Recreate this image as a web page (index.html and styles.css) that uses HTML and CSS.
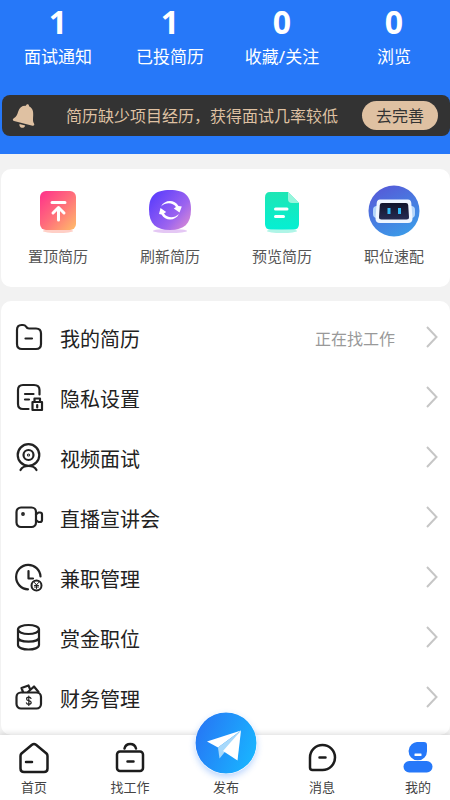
FILE: index.html
```html
<!DOCTYPE html>
<html lang="zh-CN">
<head>
<meta charset="utf-8">
<meta name="viewport" content="width=device-width, initial-scale=1">
<title>我的</title>
<link rel="stylesheet" href="styles.css">
</head>
<body>
<div class="app">
  <header class="header">
    <div class="stats">
      <a class="stat" href="#"><strong class="stat-value">1</strong><span class="stat-label">面试通知</span></a>
      <a class="stat" href="#"><strong class="stat-value">1</strong><span class="stat-label">已投简历</span></a>
      <a class="stat" href="#"><strong class="stat-value">0</strong><span class="stat-label">收藏/关注</span></a>
      <a class="stat" href="#"><strong class="stat-value">0</strong><span class="stat-label">浏览</span></a>
    </div>
    <div class="notice">
      <svg class="notice-icon" width="24" height="28" viewBox="0 0 24 28" fill="#dfc1a2">
        <path d="M14 3.800C14.200 1.600 17.200 1.800 17 4.200C20.800 6 21.400 9.600 21.200 13C21 17 20.600 19.500 22 21.500C22.800 23 22 24 20.500 23.700L2 19C.5 18.500.4 17 1.800 16.300C4.500 15 5.200 12.500 6.200 9.500C7.500 5.500 10 3.500 14 3.800Z"/>
        <path d="M7.500 22L13.200 23.400C12.800 25.500 11 26.200 9.500 25.700C8 25.200 7 23.800 7.500 22Z"/>
      </svg>
      <p class="notice-text">简历缺少项目经历，获得面试几率较低</p>
      <button class="notice-button" type="button">去完善</button>
    </div>
  </header>

  <main class="main">
    <nav class="card shortcuts" aria-label="简历工具">
      <a class="shortcut" href="#">
        <svg width="52" height="52" viewBox="0 0 52 52">
          <defs>
            <linearGradient id="pin" x1="0" y1="0" x2="1" y2="1"><stop offset="0" stop-color="#ff2f8b"/><stop offset=".5" stop-color="#ff6e7b"/><stop offset="1" stop-color="#ffbe69"/></linearGradient>
          </defs>
          <ellipse cx="26" cy="46" rx="15" ry="2" fill="#ffcfc6"/>
          <rect x="8" y="6" width="36" height="39" rx="6" fill="url(#pin)"/>
          <path d="M20 17.500H33M26.500 35V24M21 28L26.500 22.500L32 28" fill="none" stroke="#fff" stroke-width="3" stroke-linecap="round" stroke-linejoin="round"/>
        </svg>
        <span>置顶简历</span>
      </a>
      <a class="shortcut" href="#">
        <svg width="52" height="52" viewBox="0 0 52 52">
          <defs>
            <linearGradient id="refresh" x1="0" y1=".2" x2="1" y2="1"><stop offset="0" stop-color="#5c3dfc"/><stop offset=".6" stop-color="#9c64ef"/><stop offset="1" stop-color="#e391cf"/></linearGradient>
          </defs>
          <ellipse cx="26" cy="46" rx="17" ry="2" fill="#e4c7f4"/>
          <path d="M26 5C41 5 47 11 47 24.500C47 39 40 45 26 45C12 45 5 39 5 24.500C5 11 11 5 26 5Z" fill="url(#refresh)"/>
          <path d="M17 21.500C20.500 14.500 30.500 14 34.500 21L37.800 21.500L35.500 27.500L29.800 23.500L32 22C28.500 17 21.500 17.300 17 21.500Z" fill="#fff"/>
          <path d="M35 29C31.500 36 21.500 36.500 17.500 29.500L15 29L16.500 23L22.200 27L20 28.500C23.500 33.500 30.500 33.200 35 29Z" fill="#fff"/>
        </svg>
        <span>刷新简历</span>
      </a>
      <a class="shortcut" href="#">
        <svg width="52" height="52" viewBox="0 0 52 52">
          <defs>
            <linearGradient id="preview" x1="0" y1="0" x2="0" y2="1"><stop offset="0" stop-color="#1ee6b4"/><stop offset="1" stop-color="#05efd3"/></linearGradient>
          </defs>
          <ellipse cx="26" cy="46" rx="15" ry="2" fill="#aff5e7"/>
          <path d="M14 7H32L43 18V39Q43 44.500 37.500 44.500H14.500Q9 44.500 9 39V12.500Q9 7 14 7Z" fill="url(#preview)"/>
          <path d="M32 7L43 18H36Q32 18 32 14Z" fill="#98f5dc"/>
          <path d="M19.500 24H31M19.500 31.500H27.500" stroke="#fff" stroke-width="3" stroke-linecap="round"/>
        </svg>
        <span>预览简历</span>
      </a>
      <a class="shortcut" href="#">
        <svg width="52" height="52" viewBox="0 0 52 52">
          <defs>
            <linearGradient id="match" x1=".2" y1="0" x2=".7" y2="1"><stop offset="0" stop-color="#5659d8"/><stop offset="1" stop-color="#3b9be8"/></linearGradient>
            <linearGradient id="visor" x1="0" y1="0" x2="0" y2="1"><stop offset="0" stop-color="#10142b"/><stop offset="1" stop-color="#252c52"/></linearGradient>
          </defs>
          <circle cx="26" cy="26" r="25.500" fill="url(#match)"/>
          <rect x="5" y="21" width="8" height="12" rx="4" fill="#b5d6fa"/>
          <rect x="39" y="21" width="8" height="12" rx="4" fill="#b5d6fa"/>
          <path d="M12 14.500H40Q43 14.500 43.300 18L44.500 33Q44.800 38 40 38H12Q7.200 38 7.500 33L8.700 18Q9 14.500 12 14.500Z" fill="#eff6ff"/>
          <path d="M14 18H38Q40 18 40.200 20L41 32Q41.200 34.500 38.500 34.500H13.500Q10.800 34.500 11 32L11.800 20Q12 18 14 18Z" fill="url(#visor)"/>
          <path d="M19.500 23h3v6h-3zM30 23h3v6h-3z" fill="#31b9f5"/>
        </svg>
        <span>职位速配</span>
      </a>
    </nav>

    <nav class="card menu" aria-label="功能">
      <a class="menu-row" href="#">
        <svg class="menu-icon" viewBox="0 0 30 30"><path d="M3 8Q3 3 7.500 3H9Q11 3 12 4.500Q13 6.500 15 6.500H22Q27 6.500 27 11.500V22Q27 27 22 27H8Q3 27 3 22ZM11.500 16.500H18"/></svg>
        <span class="menu-label">我的简历</span>
        <span class="menu-status">正在找工作</span>
        <svg class="chevron" viewBox="0 0 12 22"><path d="M1 1L10.500 11L1 21"/></svg>
      </a>
      <a class="menu-row" href="#">
        <svg class="menu-icon" viewBox="0 0 30 30"><path d="M14.500 27H9Q4 27 4 22V8Q4 3 9 3H20Q25.500 3 25.500 8V12.500M11 12H19.500M11 17.500H15"/><path d="M18.500 20H28V28H18.500ZM20.500 20V16.500H26V20M23.200 23V25.500"/></svg>
        <span class="menu-label">隐私设置</span>
        <svg class="chevron" viewBox="0 0 12 22"><path d="M1 1L10.500 11L1 21"/></svg>
      </a>
      <a class="menu-row" href="#">
        <svg class="menu-icon" viewBox="0 0 30 30"><circle cx="14.500" cy="13" r="10.800"/><circle cx="14.500" cy="13" r="5"/><circle cx="14.500" cy="13" r=".5"/><path d="M6.500 28Q8.500 24 14.500 24Q20.500 24 22.500 28"/></svg>
        <span class="menu-label">视频面试</span>
        <svg class="chevron" viewBox="0 0 12 22"><path d="M1 1L10.500 11L1 21"/></svg>
      </a>
      <a class="menu-row" href="#">
        <svg class="menu-icon" viewBox="0 0 30 30"><rect x="2.500" y="5.500" width="19.500" height="19.500" rx="4.500"/><path d="M22 12.500L24.500 10.500H26Q28 10.500 28 12.500V18Q28 20 26 20H24.500L22 18"/><circle cx="9" cy="12" r=".8"/></svg>
        <span class="menu-label">直播宣讲会</span>
        <svg class="chevron" viewBox="0 0 12 22"><path d="M1 1L10.500 11L1 21"/></svg>
      </a>
      <a class="menu-row" href="#">
        <svg class="menu-icon" viewBox="0 0 30 30"><path d="M14 27.300A12.200 12.200 0 1 1 26.500 14.500M14.500 9V16.500H19"/><circle cx="22.500" cy="23.500" r="5" stroke-width="2"/><path stroke-width="1" d="M20.500 20.500L22.500 23L24.500 20.500M22.500 23V26.500M20.500 23.500H24.500M20.500 25H24.500"/></svg>
        <span class="menu-label">兼职管理</span>
        <svg class="chevron" viewBox="0 0 12 22"><path d="M1 1L10.500 11L1 21"/></svg>
      </a>
      <a class="menu-row" href="#">
        <svg class="menu-icon" viewBox="0 0 30 30"><ellipse cx="14.500" cy="7.500" rx="10.500" ry="4.500"/><path d="M4 7.500V23C4 29 25 29 25 23V7.500M4 15.500C4 21 25 21 25 15.500"/></svg>
        <span class="menu-label">赏金职位</span>
        <svg class="chevron" viewBox="0 0 12 22"><path d="M1 1L10.500 11L1 21"/></svg>
      </a>
      <a class="menu-row" href="#">
        <svg class="menu-icon" viewBox="0 0 30 30"><rect x="2.500" y="10.500" width="24.500" height="16" rx="4.500"/><path d="M9 10L7.500 6L14.500 3.500L16 7M14 10L20 4.500L24.500 10"/><path stroke-width="1.200" d="M17 16.500Q16.500 15.200 14.800 15.200Q12.600 15.200 12.600 16.900Q12.600 18.200 14.800 18.700Q17.200 19.200 17.200 20.600Q17.200 22.300 14.800 22.300Q12.800 22.300 12.400 20.800M14.800 14V23.500"/></svg>
        <span class="menu-label">财务管理</span>
        <svg class="chevron" viewBox="0 0 12 22"><path d="M1 1L10.500 11L1 21"/></svg>
      </a>
    </nav>
  </main>

  <nav class="tabbar" aria-label="主导航">
    <a class="tab" href="#">
      <svg class="tab-icon" viewBox="0 0 32 32"><path d="M2.500 14Q2.500 12.500 3.500 11.500L14 2.800Q16 1.200 18 2.800L28.500 11.500Q29.500 12.500 29.500 14V26.500Q29.500 30 26 30H6Q2.500 30 2.500 26.500ZM8 20H14"/></svg>
      <span>首页</span>
    </a>
    <a class="tab" href="#">
      <svg class="tab-icon" viewBox="0 0 32 32"><rect x="3" y="9.500" width="26" height="19.500" rx="3"/><path d="M10.500 6.500C12 .5 20.500 .5 22 6.500M13.500 19.500H19.500"/></svg>
      <span>找工作</span>
    </a>
    <a class="tab" href="#">
      <svg class="publish-icon" width="62" height="62" viewBox="0 0 62 62">
        <defs><linearGradient id="publish" x1="0" y1=".3" x2="1" y2=".7"><stop offset="0" stop-color="#2678f5"/><stop offset="1" stop-color="#19b5ff"/></linearGradient></defs>
        <circle cx="31" cy="31" r="30.500" fill="url(#publish)"/>
        <path d="M46 18.500L12 29.500L23 35.500Z" fill="#fff"/>
        <path d="M46 18.500L23 35.500L24.500 46.500L29 41Z" fill="#a7d9fb"/>
        <path d="M46 18.500L28 39L42.500 48.500Z" fill="#fff"/>
      </svg>
      <span>发布</span>
    </a>
    <a class="tab" href="#">
      <svg class="tab-icon" viewBox="0 0 32 32"><path d="M16.500 3A12.500 12.500 0 0 1 16.500 28H6.500Q4 28 4 25.500V15.500A12.500 12.500 0 0 1 16.500 3ZM13.500 15.500H19.500"/></svg>
      <span>消息</span>
    </a>
    <a class="tab" href="#" aria-current="page">
      <svg class="tab-icon tab-icon-active" viewBox="0 0 32 32"><path d="M16.500 0H22Q25 0 25 3V9A9.200 9.200 0 1 1 16.500 0Z"/><rect x="1.500" y="19" width="29" height="11.500" rx="5.700"/><rect x="12.500" y="11.500" width="7" height="2.500" rx=".5" fill="#fff"/></svg>
      <span>我的</span>
    </a>
  </nav>
</div>
</body>
</html>
```
FILE: styles.css
```css
* {
  box-sizing: border-box;
}

body {
  margin: 0;
  background: #f2f2f2;
  color: #222;
  font-family: "Noto Sans", "Noto Sans CJK SC", sans-serif;
}

a {
  color: inherit;
  text-decoration: none;
}

svg {
  display: block;
  flex: none;
}

.app {
  display: flex;
  flex-direction: column;
  min-height: 100vh;
}

.header {
  padding: 4px 0 18px 2px;
  background: #2678f9;
}

.stats,
.shortcuts {
  display: grid;
  grid-template-columns: repeat(4, 1fr);
}

.stat {
  display: flex;
  flex-direction: column;
  align-items: center;
  gap: 5px;
  color: #fff;
}

.stat-value {
  font-family: "Open Sans", "Noto Sans", sans-serif;
  font-size: 32px;
  font-weight: 700;
  line-height: 36px;
}

.stat-label {
  font-size: 17px;
  line-height: 24px;
}

.notice {
  display: flex;
  align-items: center;
  height: 41px;
  margin-top: 26px;
  padding: 0 12px 0 10px;
  border-radius: 8px;
  background: #333;
}

.notice-text {
  flex: 1;
  margin: 0 0 0 30px;
  color: #dfc1a2;
  font-size: 16px;
  line-height: 24px;
  white-space: nowrap;
}

.notice-button {
  height: 29px;
  padding: 0 14px;
  border: 0;
  border-radius: 15px;
  background: #dfc1a2;
  color: #333;
  font: inherit;
  font-size: 16px;
  line-height: 24px;
}

.main {
  display: flex;
  flex: 1;
  flex-direction: column;
  gap: 14px;
  padding: 15px 0 0 1px;
}

.card {
  border-radius: 10px;
  background: #fff;
}

.shortcuts {
  padding: 16px 0 19px 1px;
}

.shortcut {
  display: flex;
  flex-direction: column;
  align-items: center;
  gap: 7px;
  color: #555;
  font-size: 15px;
  line-height: 24px;
}

.menu {
  flex: 1;
  padding: 6px 12px 0 13px;
}

.menu-row {
  display: flex;
  align-items: center;
  height: 60px;
}

.menu-icon {
  width: 30px;
  height: 30px;
  fill: none;
  stroke: #222;
  stroke-width: 2.2;
  stroke-linecap: round;
  stroke-linejoin: round;
}

.menu-label {
  flex: 1;
  margin-left: 16px;
  padding-top: 6px;
  font-size: 20px;
  line-height: 30px;
}

.menu-status {
  margin-right: 31px;
  padding-top: 4px;
  color: #999;
  font-size: 16px;
  line-height: 24px;
}

.chevron {
  width: 12px;
  height: 22px;
  fill: none;
  stroke: #c6c6c6;
  stroke-width: 2;
}

.tabbar {
  display: flex;
  justify-content: space-between;
  align-items: flex-end;
  height: 65px;
  padding: 0 10px 3px 12px;
  background: #fff;
  box-shadow: 0 -1px 6px rgba(0, 0, 0, .15);
}

.tab {
  display: flex;
  flex-direction: column;
  align-items: center;
  gap: 3px;
  width: 44px;
  color: #444;
  font-size: 13px;
  line-height: 20px;
  white-space: nowrap;
}

.tab-icon {
  width: 32px;
  height: 32px;
  fill: none;
  stroke: #1c1c1c;
  stroke-width: 2.5;
  stroke-linecap: round;
  stroke-linejoin: round;
}

.tab-icon-active {
  fill: #2678f9;
  stroke: none;
}

.publish-icon {
  border-radius: 50%;
  box-shadow: 0 3px 6px rgba(38, 120, 249, .3);
}
```
